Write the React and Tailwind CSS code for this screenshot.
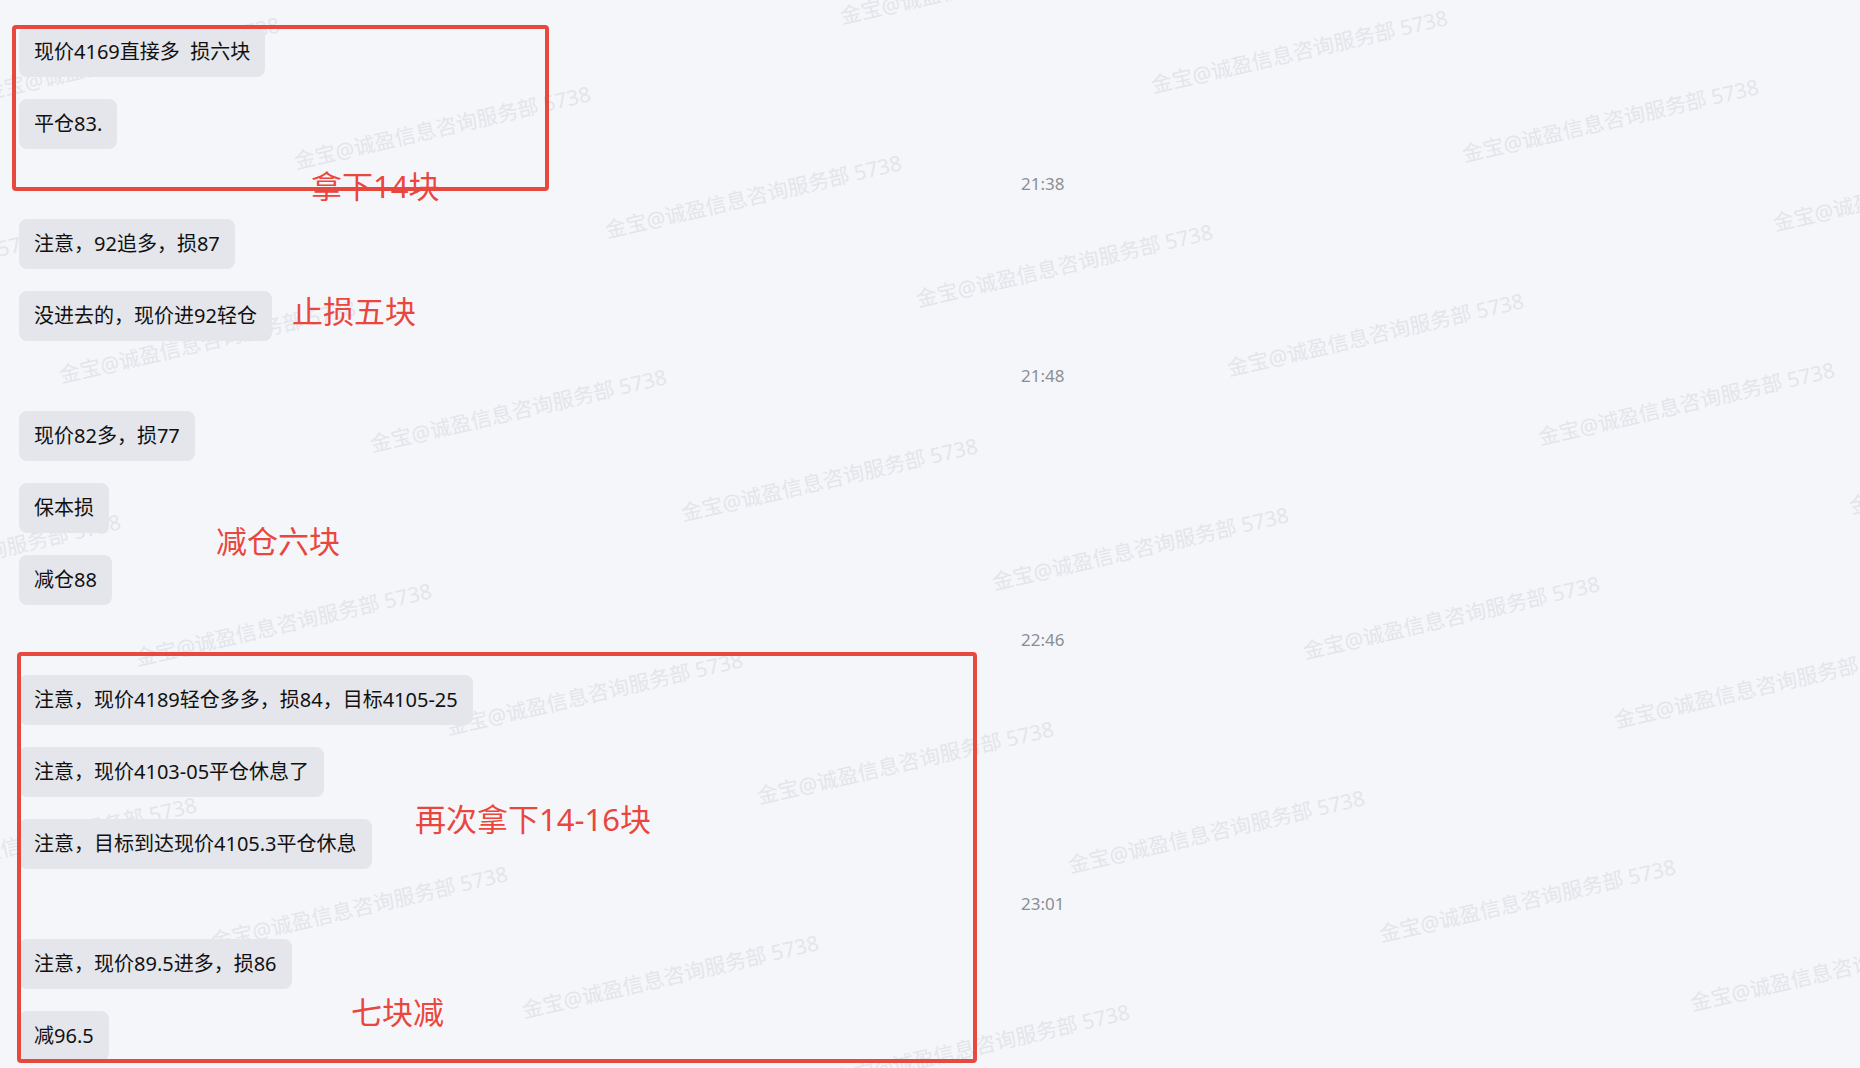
const items = [
  { t: "msg", text: "现价4169直接多  损六块" },
  { t: "msg", text: "平仓83." },
  { t: "time", text: "21:38" },
  { t: "msg", text: "注意，92追多，损87" },
  { t: "msg", text: "没进去的，现价进92轻仓" },
  { t: "time", text: "21:48" },
  { t: "msg", text: "现价82多，损77" },
  { t: "msg", text: "保本损" },
  { t: "msg", text: "减仓88" },
  { t: "time", text: "22:46" },
  { t: "msg", text: "注意，现价4189轻仓多多，损84，目标4105-25" },
  { t: "msg", text: "注意，现价4103-05平仓休息了" },
  { t: "msg", text: "注意，目标到达现价4105.3平仓休息" },
  { t: "time", text: "23:01" },
  { t: "msg", text: "注意，现价89.5进多，损86" },
  { t: "msg", text: "减96.5" },
];

// watermark lattice (lower-left corner of each text run)
const anchor = { x: 608, y: 241 };
const u = { x: 311, y: 69 };
const v = { x: 76, y: 283 };

const marks = [];
for (let j = -2; j <= 5; j++) {
  for (let i = -4; i <= 7; i++) {
    const x = anchor.x + i * u.x + j * v.x;
    const y = anchor.y + i * u.y + j * v.y;
    if (x > -360 && x < 1880 && y > -20 && y < 1160) marks.push({ x, y, k: `${i}-${j}` });
  }
}

const Watermarks = () => (
  <div className="absolute inset-0 z-0 pointer-events-none overflow-hidden">
    {marks.map((m) => (
      <span
        key={m.k}
        className="absolute whitespace-pre leading-none text-[21px] text-[#e3e5ea] origin-bottom-left rotate-[-13deg]"
        style={{ left: m.x, top: m.y - 21 }}
      >
        金宝@诚盈信息咨询服务部 5738
      </span>
    ))}
  </div>
);

const Bubble = ({ text }) => (
  <div className="flex">
    <div className="h-[50px] flex items-center px-[15px] rounded-lg bg-[#e4e6eb] text-[20px] text-[#111111] whitespace-pre">
      {text}
    </div>
  </div>
);

const TimeRow = ({ text }) => (
  <div className="h-[26px] flex items-center pl-[1002px] text-[17px] text-[#8b8e93]">
    {text}
  </div>
);

const Label = ({ children, className }) => (
  <div className={`absolute z-20 leading-none text-[31px] text-[#e9473e] whitespace-nowrap ${className}`}>
    {children}
  </div>
);

export default function App() {
  return (
    <div className="relative w-full h-[1068px] overflow-hidden bg-[#f5f6fa] font-['Noto_Sans','Noto_Sans_CJK_SC',sans-serif]">
      <Watermarks />

      <div className="relative z-10 flex flex-col gap-[22px] pt-[27px] pl-[19px]">
        {items.map((it, idx) =>
          it.t === "msg" ? (
            <Bubble key={idx} text={it.text} />
          ) : (
            <TimeRow key={idx} text={it.text} />
          )
        )}
      </div>

      {/* annotation boxes drawn over the chat */}
      <div className="absolute z-20 left-[12px] top-[25px] w-[537px] h-[166px] border-4 border-[#e8493f] rounded-[4px]" />
      <div className="absolute z-20 left-[17px] top-[652px] w-[960px] h-[411px] border-4 border-[#e8493f] rounded-[4px]" />

      <Label className="left-[311px] top-[171px]">拿下14块</Label>
      <Label className="left-[292px] top-[296px]">止损五块</Label>
      <Label className="left-[216px] top-[526px]">减仓六块</Label>
      <Label className="left-[415px] top-[804px]">再次拿下14-16块</Label>
      <Label className="left-[351px] top-[997px]">七块减</Label>
    </div>
  );
}
